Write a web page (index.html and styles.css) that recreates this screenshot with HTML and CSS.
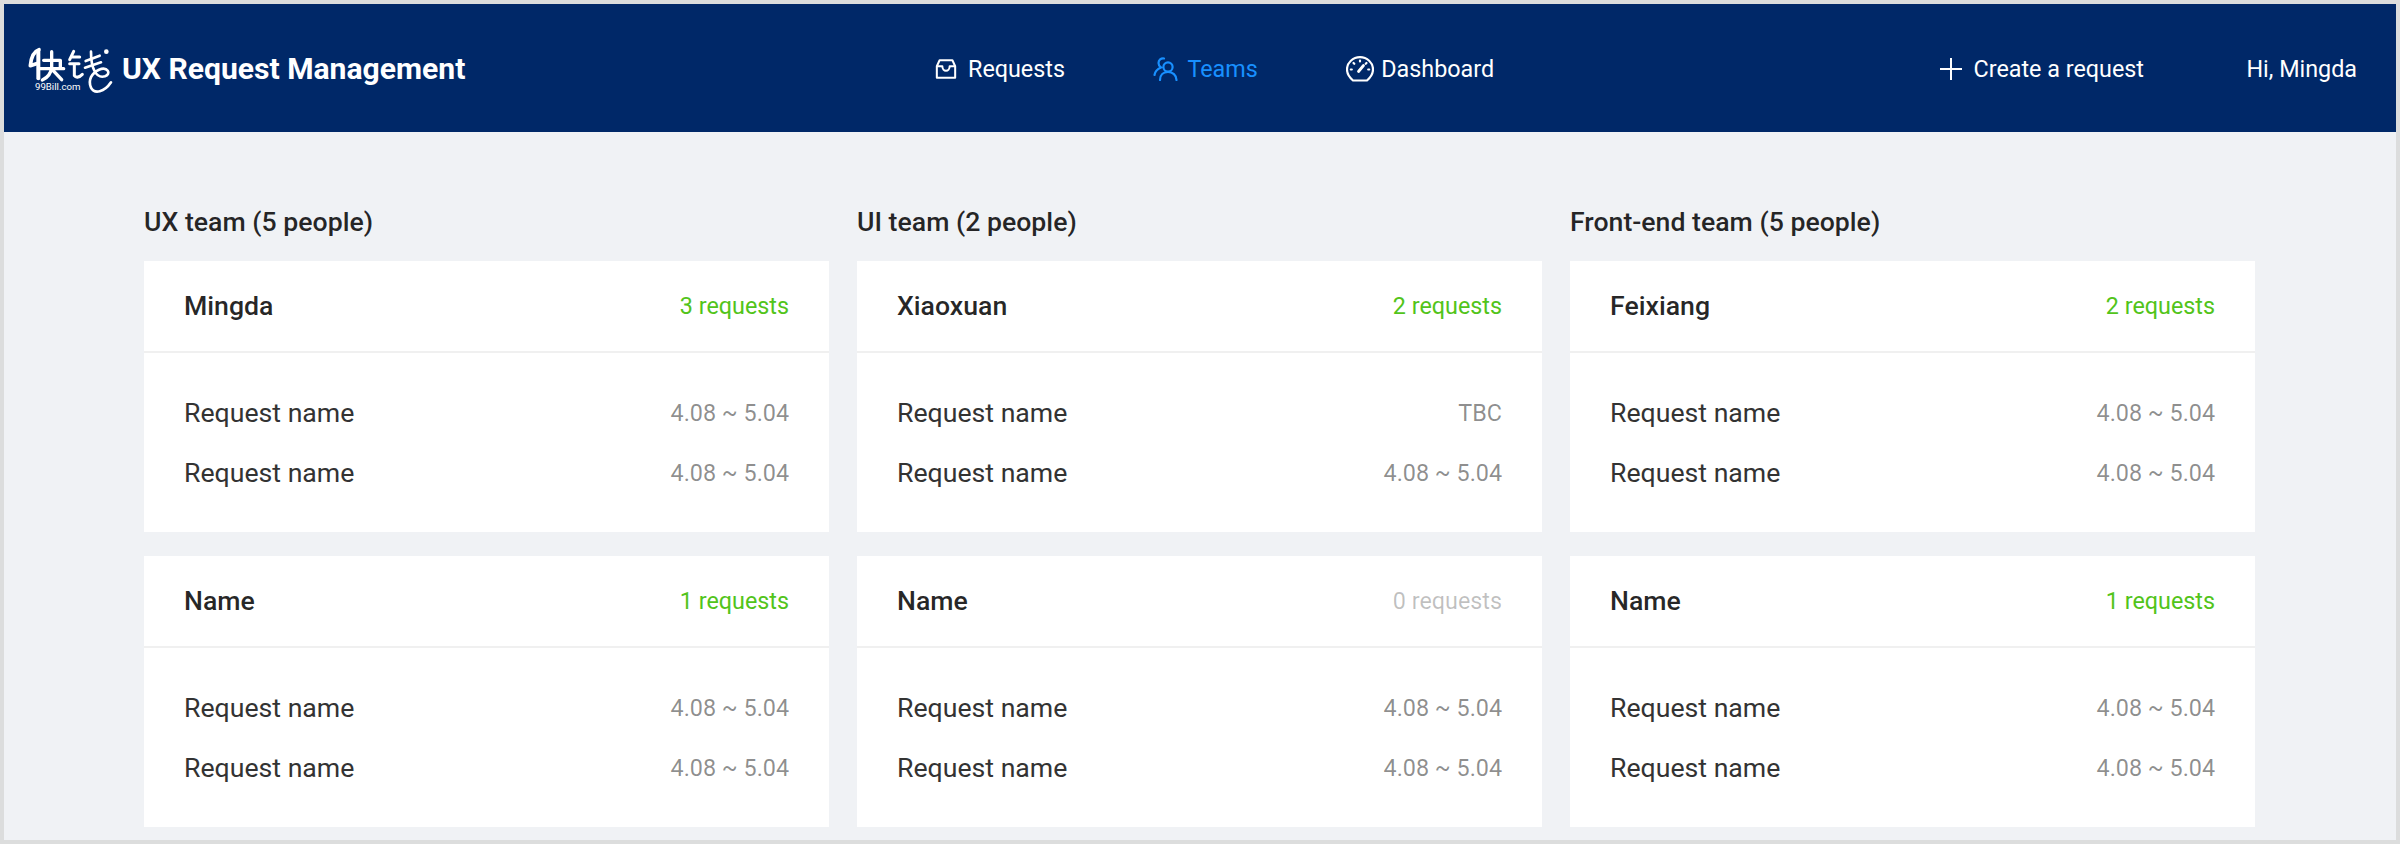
FILE: index.html
```html
<!DOCTYPE html>
<html lang="en">
<head>
    <meta charset="UTF-8">
    <meta name="viewport" content="width=device-width, initial-scale=1.0">
    <title>UX Request Management</title>
    <link rel="stylesheet" href="styles.css">
</head>
<body>
    <div class="frame">
        <header class="topbar">
            <div class="brand">
                <svg class="logo" viewBox="0 0 330 210" fill="none" stroke="#fff" stroke-width="9" stroke-linecap="round" stroke-linejoin="round">
                    <path d="M66 50C48 56 42 74 40 98L58 92" stroke-width="11"/>
                    <path d="M64 54V136" stroke-width="12"/>
                    <path d="M80 82H130V106M104 56V102C102 122 92 134 76 141M70 107H140M108 112L134 140" stroke-width="10"/>
                    <path d="M170 55L158 80M162 72H188M158 92H186M172 92V128C178 136 188 132 196 124" stroke-width="9"/>
                    <path d="M206 84L248 68M204 104L252 88" stroke-width="8"/>
                    <path d="M222 56C222 104 236 138 264 130C284 122 272 100 246 110C224 120 212 142 222 164C232 184 262 178 282 148" stroke-width="8"/>
                    <circle cx="268" cy="56" r="7" fill="#fff" stroke="none"/>
                    <text class="logo-text" x="54" y="172" fill="#fff" stroke="none">99Bill.com</text>
                </svg>
                <span class="brand-name">UX Request Management</span>
            </div>
            <nav class="nav">
                <a class="nav-item">
                    <svg class="icon" viewBox="0 0 24 24" fill="none" stroke="currentColor" stroke-width="2.200" stroke-linejoin="round">
                        <path d="M5 2.500H19L22 9V21.500H2V9Z"/>
                        <path d="M2 9H8C8 12 10 14 12 14S16 12 16 9H22"/>
                    </svg>
                    Requests
                </a>
                <a class="nav-item active">
                    <svg class="icon icon-team" viewBox="0 0 26 24" fill="none" stroke="currentColor" stroke-width="2.200" stroke-linecap="round">
                        <circle cx="15" cy="10" r="4.600"/>
                        <path d="M7 23C7 18 10.500 15 15 15S23.500 18 23.500 23"/>
                        <path d="M11 1.500C8 1 5.500 3 5.500 6C5.500 8 6.500 9.500 8 10.500C4.500 12 2 14.500 1.500 18"/>
                    </svg>
                    Teams
                </a>
                <a class="nav-item">
                    <svg class="icon icon-dash" viewBox="0 0 28 26" fill="none" stroke="currentColor" stroke-width="2.200" stroke-linecap="round">
                        <path d="M7 24.500H21C24.500 21.500 27 18 27 13.500C27 6.500 21 1.200 14 1.200S1 6.500 1 13.500C1 18 3.500 21.500 7 24.500Z"/>
                        <path d="M12.500 15.500L17.500 9.500" stroke-width="2.800"/>
                        <path d="M14 4.500V5.500M7.500 7L8.300 7.800M20.500 7L19.700 7.800M4.800 13.500H5.800M22.200 13.500H23.200"/>
                    </svg>
                    Dashboard
                </a>
            </nav>
            <a class="create">
                <svg class="icon-plus" viewBox="0 0 22 22" fill="none" stroke="currentColor" stroke-width="2">
                    <path d="M11 0V22M0 11H22"/>
                </svg>
                Create a request
            </a>
            <span class="user">Hi, Mingda</span>
        </header>

        <main class="board">
            <section class="team">
                <h2 class="team-title">UX team (5 people)</h2>
                <div class="card">
                    <div class="card-head"><h3>Mingda</h3><span class="count">3 requests</span></div>
                    <ul class="rows">
                        <li><span>Request name</span><span class="date">4.08 ~ 5.04</span></li>
                        <li><span>Request name</span><span class="date">4.08 ~ 5.04</span></li>
                    </ul>
                </div>
                <div class="card">
                    <div class="card-head"><h3>Name</h3><span class="count">1 requests</span></div>
                    <ul class="rows">
                        <li><span>Request name</span><span class="date">4.08 ~ 5.04</span></li>
                        <li><span>Request name</span><span class="date">4.08 ~ 5.04</span></li>
                    </ul>
                </div>
            </section>

            <section class="team">
                <h2 class="team-title">UI team (2 people)</h2>
                <div class="card">
                    <div class="card-head"><h3>Xiaoxuan</h3><span class="count">2 requests</span></div>
                    <ul class="rows">
                        <li><span>Request name</span><span class="date">TBC</span></li>
                        <li><span>Request name</span><span class="date">4.08 ~ 5.04</span></li>
                    </ul>
                </div>
                <div class="card">
                    <div class="card-head"><h3>Name</h3><span class="count empty">0 requests</span></div>
                    <ul class="rows">
                        <li><span>Request name</span><span class="date">4.08 ~ 5.04</span></li>
                        <li><span>Request name</span><span class="date">4.08 ~ 5.04</span></li>
                    </ul>
                </div>
            </section>

            <section class="team">
                <h2 class="team-title">Front-end team (5 people)</h2>
                <div class="card">
                    <div class="card-head"><h3>Feixiang</h3><span class="count">2 requests</span></div>
                    <ul class="rows">
                        <li><span>Request name</span><span class="date">4.08 ~ 5.04</span></li>
                        <li><span>Request name</span><span class="date">4.08 ~ 5.04</span></li>
                    </ul>
                </div>
                <div class="card">
                    <div class="card-head"><h3>Name</h3><span class="count">1 requests</span></div>
                    <ul class="rows">
                        <li><span>Request name</span><span class="date">4.08 ~ 5.04</span></li>
                        <li><span>Request name</span><span class="date">4.08 ~ 5.04</span></li>
                    </ul>
                </div>
            </section>
        </main>
    </div>
</body>
</html>
```

FILE: styles.css
```css
*{
    margin: 0px;
    padding: 0px;
    box-sizing: border-box;
}
html, body{
    height: 844px;
    overflow: hidden;
}
body{
    background-color: #dcdddd;
    padding: 4px;
    font-family: Roboto, "Noto Sans", sans-serif;
}
.frame{
    height: 836px;
    background-color: #f0f2f5;
    overflow: hidden;
}
.topbar{
    height: 128px;
    background-color: #002868;
    color: #fff;
    display: flex;
    align-items: center;
    padding: 0 39px 0 13px;
    font-size: 23.33px;
}
.brand{
    width: 918px;
    display: flex;
    align-items: center;
}
.logo{
    width: 110px;
    height: 70px;
    flex-shrink: 0;
}
.logo-text{
    font-family: Roboto, sans-serif;
    font-size: 29px;
}
.brand-name{
    font-size: 30.1px;
    font-weight: 700;
    margin-left: -5px;
}
.nav{
    display: flex;
    gap: 88.5px;
    margin-top: 2px;
}
.nav-item{
    display: flex;
    align-items: center;
    gap: 11px;
}
.nav-item.active{
    color: #1890ff;
    gap: 8px;
}
.nav-item:last-child{
    gap: 7px;
}
.icon{
    width: 22px;
    height: 22px;
}
.icon-team{
    width: 26px;
    height: 24px;
}
.icon-dash{
    width: 28px;
    height: 26px;
}
.create{
    margin-left: auto;
    margin-top: 2px;
    display: flex;
    align-items: center;
    gap: 12px;
}
.icon-plus{
    width: 22px;
    height: 22px;
}
.user{
    margin-left: 102.5px;
    margin-top: 2px;
}
.board{
    display: grid;
    grid-template-columns: repeat(3, 685px);
    gap: 28px;
    padding: 72px 0 0 140px;
}
.team-title{
    font-size: 26.67px;
    font-weight: 500;
    line-height: 36px;
    color: rgba(0, 0, 0, .85);
    margin-bottom: 21px;
}
.card{
    background-color: #fff;
    margin-bottom: 24px;
    height: 271px;
}
.card-head{
    height: 92px;
    border-bottom: 2px solid #f0f0f0;
    padding: 0 40px;
    display: flex;
    justify-content: space-between;
    align-items: center;
}
.card-head h3{
    font-size: 26.67px;
    font-weight: 500;
    color: rgba(0, 0, 0, .85);
}
.count{
    font-size: 23.33px;
    color: #52c41a;
}
.count.empty{
    color: rgba(0, 0, 0, .25);
}
.rows{
    list-style: none;
    padding: 30px 40px 0;
}
.rows li{
    height: 60px;
    display: flex;
    justify-content: space-between;
    align-items: center;
    font-size: 26.67px;
    color: #333;
}
.date{
    font-size: 23.33px;
    color: rgba(0, 0, 0, .45);
}
```
